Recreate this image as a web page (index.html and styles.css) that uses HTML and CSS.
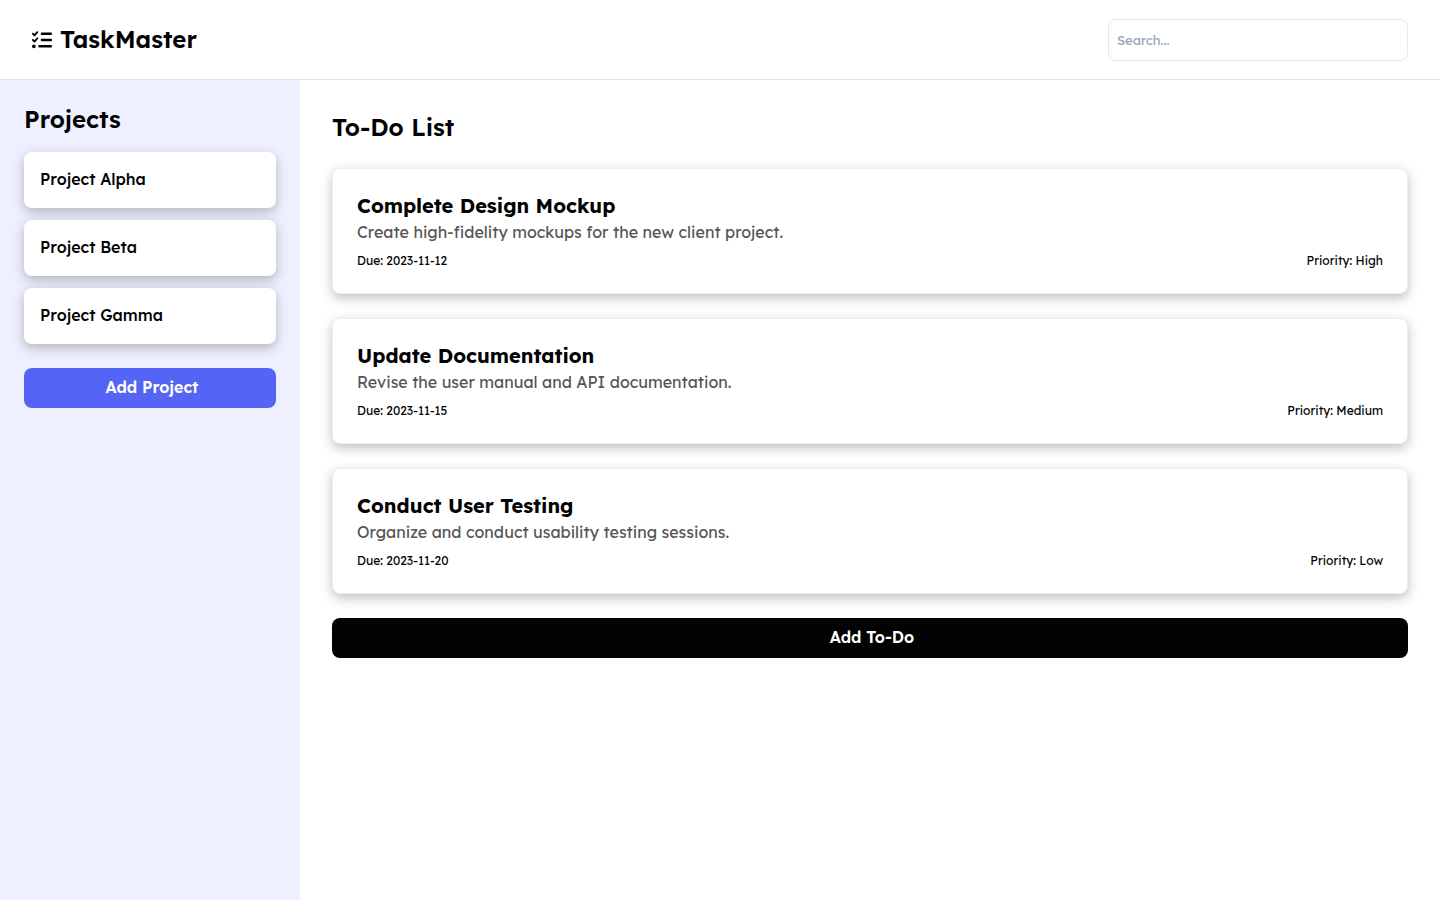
FILE: index.html
```html
<!DOCTYPE html>
<html lang="en">
<head>
<meta charset="utf-8">
<meta name="viewport" content="width=device-width, initial-scale=1">
<title>TaskMaster</title>
<link rel="stylesheet" href="styles.css">
</head>
<body class="app">
<header class="header">
  <h1 class="logo">
    <svg class="logo-icon" viewBox="0 0 512 512" aria-hidden="true"><path d="M152.1 38.2c9.9 8.9 10.7 24 1.8 33.9l-72 80c-4.4 4.9-10.6 7.8-17.2 7.9s-12.9-2.4-17.6-7L7 113C-2.3 103.6-2.3 88.4 7 79s24.6-9.4 33.9 0l22.1 22.1 55.1-61.2c8.9-9.9 24-10.7 33.9-1.8zm0 160c9.9 8.9 10.7 24 1.8 33.9l-72 80c-4.4 4.9-10.6 7.8-17.2 7.9s-12.9-2.4-17.6-7L7 273c-9.4-9.4-9.4-24.6 0-33.9s24.6-9.4 33.9 0l22.1 22.1 55.1-61.2c8.9-9.9 24-10.7 33.9-1.8zM224 96c0-17.7 14.3-32 32-32H480c17.7 0 32 14.3 32 32s-14.3 32-32 32H256c-17.7 0-32-14.3-32-32zm0 160c0-17.7 14.3-32 32-32H480c17.7 0 32 14.3 32 32s-14.3 32-32 32H256c-17.7 0-32-14.3-32-32zM160 416c0-17.7 14.3-32 32-32H480c17.7 0 32 14.3 32 32s-14.3 32-32 32H192c-17.7 0-32-14.3-32-32zM48 368a48 48 0 1 1 0 96 48 48 0 1 1 0-96z"/></svg>
    <span class="logo-text">TaskMaster</span>
  </h1>
  <input class="search" type="search" placeholder="Search..." aria-label="Search">
</header>
<div class="body">
  <aside class="sidebar">
    <h2 class="heading">Projects</h2>
    <ul class="projects">
      <li class="project">Project Alpha</li>
      <li class="project">Project Beta</li>
      <li class="project">Project Gamma</li>
    </ul>
    <button class="button button-primary" type="button">Add Project</button>
  </aside>
  <main class="main">
    <h2 class="heading">To-Do List</h2>
    <article class="card">
      <h3 class="card-title">Complete Design Mockup</h3>
      <p class="card-text">Create high-fidelity mockups for the new client project.</p>
      <div class="card-meta"><span>Due: 2023-11-12</span><span>Priority: High</span></div>
    </article>
    <article class="card">
      <h3 class="card-title">Update Documentation</h3>
      <p class="card-text">Revise the user manual and API documentation.</p>
      <div class="card-meta"><span>Due: 2023-11-15</span><span>Priority: Medium</span></div>
    </article>
    <article class="card">
      <h3 class="card-title">Conduct User Testing</h3>
      <p class="card-text">Organize and conduct usability testing sessions.</p>
      <div class="card-meta"><span>Due: 2023-11-20</span><span>Priority: Low</span></div>
    </article>
    <button class="button button-dark" type="button">Add To-Do</button>
  </main>
</div>
</body>
</html>
```
FILE: styles.css
```css
* {
  box-sizing: border-box;
  margin: 0;
  padding: 0;
}

.app {
  display: flex;
  flex-direction: column;
  min-height: 100vh;
  background: #fff;
  color: #020202;
  font-family: Lexend, Inter, sans-serif;
  font-size: 16px;
  line-height: 24px;
}

.header {
  display: flex;
  align-items: center;
  justify-content: space-between;
  height: 80px;
  padding: 0 32px;
  border-bottom: 1px solid #e5e5e5;
}

.logo {
  display: flex;
  align-items: center;
  gap: 8px;
  font-size: 24px;
  font-weight: 600;
  line-height: 30px;
}

.logo-text {
  padding-bottom: 2px;
}

.logo-icon {
  width: 20px;
  height: 20px;
  fill: currentColor;
}

.search {
  width: 300px;
  height: 42px;
  padding: 0 8px;
  border: 1px solid #e8e8e8;
  border-radius: 8px;
  background: #fff;
  font-family: inherit;
  font-size: 13px;
  appearance: none;
}

.search::placeholder {
  color: #94a3b8;
}

.body {
  display: flex;
  flex: 1;
}

.sidebar {
  flex: 0 0 300px;
  display: flex;
  flex-direction: column;
  padding: 24px;
  background: #eef0ff;
}

.heading {
  padding-bottom: 2px;
  font-size: 24px;
  font-weight: 600;
  line-height: 30px;
}

.projects {
  display: flex;
  flex-direction: column;
  gap: 12px;
  margin: 16px 0 24px;
  list-style: none;
}

.project {
  padding: 15px 16px 17px;
  border-radius: 8px;
  background: #fff;
  box-shadow: 0 4px 12px rgba(0, 0, 0, 0.25);
  font-weight: 500;
}

.main {
  flex: 1;
  display: flex;
  flex-direction: column;
  gap: 24px;
  padding: 32px;
}

.card {
  padding: 23px 24px 24px;
  border: 1px solid #eee;
  border-radius: 8px;
  background: #fff;
  box-shadow: 0 4px 12px rgba(0, 0, 0, 0.25);
}

.card-title {
  font-size: 20px;
  font-weight: 700;
  line-height: 28px;
}

.card-text {
  color: #555;
}

.card-meta {
  display: flex;
  justify-content: space-between;
  margin-top: 9px;
  font-size: 12px;
  line-height: 16px;
}

.button {
  height: 40px;
  padding: 0 8px 2px 12px;
  border: 0;
  border-radius: 8px;
  color: #fff;
  font: inherit;
  font-weight: 600;
  cursor: pointer;
}

.button-primary {
  background: #5465f5;
}

.button-dark {
  background: #020202;
}
```
